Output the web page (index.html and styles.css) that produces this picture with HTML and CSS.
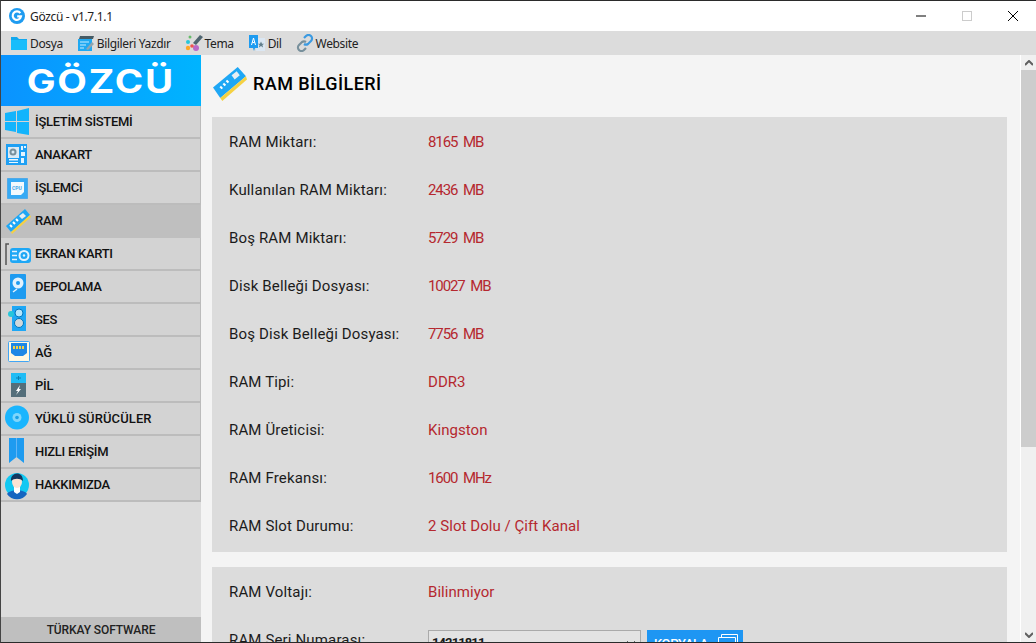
FILE: index.html
```html
<!DOCTYPE html>
<html lang="tr">
<head>
<meta charset="utf-8">
<title>Gözcü</title>
<link rel="stylesheet" href="styles.css">
</head>
<body>
<div class="window">
  <header class="titlebar">
    <svg class="app-icon" viewBox="0 0 16 16"><circle cx="8" cy="8" r="8" fill="#1e9bf0"/><path d="M11.300 5.200A4.200 4.200 0 1 0 12 8.400H8.200" fill="none" stroke="#fff" stroke-width="2.200"/></svg>
    <span class="app-title">Gözcü - v1.7.1.1</span>
    <div class="win-controls">
      <svg class="win-btn" viewBox="0 0 46 30"><path d="M18 15h10" stroke="#000" stroke-width="1"/></svg>
      <svg class="win-btn" viewBox="0 0 46 30"><rect x="18.500" y="10.500" width="9" height="9" fill="none" stroke="#ccc"/></svg>
      <svg class="win-btn" viewBox="0 0 46 30"><path d="M18 10l10 10M28 10L18 20" stroke="#000" stroke-width="1"/></svg>
    </div>
  </header>
  <nav class="menubar">
    <span class="menu-item"><svg class="menu-icon" viewBox="0 0 18 18"><path d="M1 3h6l2 2h8v11H1z" fill="#12a8ee"/><path d="M1 6h16v10H1z" fill="#18bdfb"/></svg>Dosya</span>
    <span class="menu-item"><svg class="menu-icon" viewBox="0 0 18 18"><path d="M1 5h14v12H1z" fill="#1fa9f2"/><path d="M3 2h14l-1 3H2z" fill="#455a64"/><path d="M3 8h9M3 11h6M3 14h4" stroke="#c8ecff" stroke-width="1"/><path d="M9 15l6-7 2 2-6 6z" fill="#90a4ae"/></svg>Bilgileri Yazdır</span>
    <span class="menu-item"><svg class="menu-icon" viewBox="0 0 18 18"><path d="M8 9l7-8 3 2-7 8z" fill="#4f6570"/><circle cx="3" cy="8" r="2" fill="#26c6da"/><circle cx="5" cy="3" r="1.500" fill="#66bb6a"/><circle cx="3" cy="14" r="2.200" fill="#ffa726"/><circle cx="11" cy="14" r="3" fill="#ba68c8"/><circle cx="7" cy="12" r="1.800" fill="#ef5350"/></svg>Tema</span>
    <span class="menu-item"><svg class="menu-icon" viewBox="0 0 18 18"><path d="M8 4h9v13H8z" fill="#dbe7f3"/><path d="M1 1h9v13H7l-1 3-1-3H1z" fill="#1e9bf0"/><path d="M3.500 11L5.500 4l2 7M4.300 8.500h2.400" stroke="#fff" fill="none"/><path d="M13 7.500l1 2.200h2.200l-1.800 1.400.7 2.400-2.100-1.400-2.100 1.400.7-2.400-1.800-1.400H12z" fill="#607d8b"/></svg>Dil</span>
    <span class="menu-item"><svg class="menu-icon" viewBox="0 0 18 18"><path d="M8 4l2-2a3.500 3.500 0 0 1 5 5l-3 3a3.500 3.500 0 0 1-4 0" fill="none" stroke="#3b9ae1" stroke-width="2.200"/><path d="M10 14l-2 2a3.500 3.500 0 0 1-5-5l3-3a3.500 3.500 0 0 1 4 0" fill="none" stroke="#78909c" stroke-width="2.200"/></svg>Website</span>
  </nav>
  <div class="body">
    <aside class="sidebar">
      <div class="logo"><span class="logo-text">GÖZCÜ</span></div>
      <ul class="nav">
        <li class="nav-item"><svg class="nav-icon" viewBox="0 0 30 30"><path d="M4 6l11-2v10H4zM16 4l12-3v13H16zM4 15h11v10L4 23zM16 15h12v13l-12-2z" fill="#12b4fc"/></svg>İŞLETİM SİSTEMİ</li>
        <li class="nav-item"><svg class="nav-icon" viewBox="0 0 30 30"><rect x="5" y="4" width="21" height="21" fill="#1ea0f4"/><rect x="7" y="7" width="11" height="11" fill="#dcebf5"/><circle cx="12" cy="12" r="3.500" fill="#78909c"/><circle cx="12" cy="12" r="1.500" fill="#dcebf5"/><path d="M8 19h9v1.500H8zM8 22h9v1H8z" fill="#eaf6fd"/><path d="M20 6h2v4h-2zM23 6h2v2h-2zM20 12h4v4h-4zM20 18h3v5h-3z" fill="#e3f4ff"/></svg>ANAKART</li>
        <li class="nav-item"><svg class="nav-icon" viewBox="0 0 30 30"><rect x="6.500" y="5.500" width="20" height="20" fill="#35aaf5" stroke="#1e96ea" stroke-dasharray="1 1"/><path d="M10 9h13v10l-3 3H10z" fill="#f2f9fd"/><text class="cpu-text" x="16" y="17">CPU</text></svg>İŞLEMCİ</li>
        <li class="nav-item active"><svg class="nav-icon" viewBox="0 0 30 30"><path d="M5 20L24 3l5 6L10 26z" fill="#1ea7f5"/><path d="M10 26L29 9l1 2-19 17z" fill="#f5d142"/><path d="M9 19l2 2M12 16l2 2M15 13l2 2" stroke="#fff" stroke-width="2"/><path d="M18 10l4-3 3 3-4 3z" fill="#e6eef3"/></svg>RAM</li>
        <li class="nav-item"><svg class="nav-icon" viewBox="0 0 30 30"><path d="M8 5H5v21" fill="none" stroke="#555" stroke-width="1.500"/><rect x="9" y="9" width="21" height="15" rx="3" fill="#1ea7f5"/><circle cx="23" cy="16.500" r="4.500" fill="none" stroke="#e3f2fd" stroke-width="2"/><circle cx="23" cy="16.500" r="1.200" fill="#e3f2fd"/><path d="M11 12.500h5M11 16.500h5M11 20.500h5" stroke="#e3f2fd" stroke-width="1.500"/></svg>EKRAN KARTI</li>
        <li class="nav-item"><svg class="nav-icon" viewBox="0 0 30 30"><rect x="9" y="2" width="16" height="25" rx="1" fill="#1e9bf0"/><circle cx="17" cy="11" r="5.500" fill="#e3f2fd"/><circle cx="17" cy="11" r="2" fill="#1e9bf0"/><path d="M12 20l4-3" stroke="#e3f2fd" stroke-width="1.500"/></svg>DEPOLAMA</li>
        <li class="nav-item"><svg class="nav-icon" viewBox="0 0 30 30"><rect x="11" y="1" width="14" height="25" fill="#1ea7f5"/><circle cx="18" cy="8" r="4" fill="#b3e5fc" stroke="#0277bd"/><circle cx="18" cy="18" r="4.500" fill="#cfd8dc" stroke="#0277bd"/><circle cx="10" cy="9" r="3" fill="#26c6da"/></svg>SES</li>
        <li class="nav-item"><svg class="nav-icon" viewBox="0 0 30 30"><rect x="7.500" y="3.500" width="21" height="20" rx="1" fill="#fff8e1" stroke="#42a5f5"/><path d="M10 5h16v10l-4 3h-8l-4-3z" fill="#1e88e5"/><path d="M12 8h2v3h-2zM15 8h2v3h-2zM18 8h2v3h-2zM21 8h2v3h-2z" fill="#f5d142"/></svg>AĞ</li>
        <li class="nav-item"><svg class="nav-icon" viewBox="0 0 30 30"><rect x="10" y="2" width="15" height="10" fill="#1fbcf5"/><rect x="10" y="12" width="15" height="14" fill="#546e7a"/><path d="M19 14l-4 6h2l-2 4 5-6h-2z" fill="#fff"/><path d="M15 7h5M17.500 5v4" stroke="#0b7db0"/></svg>PİL</li>
        <li class="nav-item wide"><svg class="nav-icon" viewBox="0 0 30 30"><circle cx="16" cy="13.500" r="12" fill="#19b5fe"/><circle cx="16" cy="13.500" r="4.500" fill="#7fd6fb"/><circle cx="16" cy="13.500" r="1.800" fill="#19a0e6"/></svg>YÜKLÜ SÜRÜCÜLER</li>
        <li class="nav-item"><svg class="nav-icon" viewBox="0 0 30 30"><path d="M8 1h15v25l-7.500-6L8 26z" fill="#1e9bf0"/><path d="M15 1h1v19h-1z" fill="#64b5f6"/></svg>HIZLI ERİŞİM</li>
        <li class="nav-item"><svg class="nav-icon" viewBox="0 0 30 30"><circle cx="16" cy="15" r="12" fill="#12c8f2"/><path d="M6 24c3-5 17-5 20 0a12 12 0 0 1-20 0z" fill="#1565c0"/><path d="M13 17h6v5l-3 2-3-2z" fill="#fff"/><ellipse cx="16" cy="12" rx="5" ry="6" fill="#fde3d3"/><path d="M10 11c-1-9 12-11 12 0-3-3-9-3-12 0z" fill="#14385f"/></svg>HAKKIMIZDA</li>
      </ul>
      <div class="sidebar-footer">TÜRKAY SOFTWARE</div>
    </aside>
    <main class="content">
      <h1 class="page-title"><svg class="page-icon" viewBox="0 0 34 34"><path d="M1 21L25 1l8 9L8 31z" fill="#1ea7f5"/><path d="M8 31L33 10l1 3L10 34z" fill="#f5d142"/><path d="M8 20l2 2M11 17l2 2M14 14l2 2" stroke="#fff" stroke-width="2"/><path d="M19 9l5-4 3 4-5 4z" fill="#e6eef3"/></svg>RAM BİLGİLERİ</h1>
      <section class="card">
        <div class="row"><span class="label">RAM Miktarı:</span><span class="value num">8165 MB</span></div>
        <div class="row"><span class="label">Kullanılan RAM Miktarı:</span><span class="value num">2436 MB</span></div>
        <div class="row"><span class="label">Boş RAM Miktarı:</span><span class="value num">5729 MB</span></div>
        <div class="row"><span class="label">Disk Belleği Dosyası:</span><span class="value num">10027 MB</span></div>
        <div class="row"><span class="label">Boş Disk Belleği Dosyası:</span><span class="value num">7756 MB</span></div>
        <div class="row"><span class="label">RAM Tipi:</span><span class="value">DDR3</span></div>
        <div class="row"><span class="label">RAM Üreticisi:</span><span class="value">Kingston</span></div>
        <div class="row"><span class="label">RAM Frekansı:</span><span class="value num">1600 MHz</span></div>
        <div class="row"><span class="label">RAM Slot Durumu:</span><span class="value">2 Slot Dolu / Çift Kanal</span></div>
      </section>
      <section class="card">
        <div class="row"><span class="label">RAM Voltajı:</span><span class="value">Bilinmiyor</span></div>
        <div class="row serial"><span class="label">RAM Seri Numarası:</span>
          <div class="select">14211811<svg class="chev" viewBox="0 0 10 6"><path d="M1 1l4 4 4-4" fill="none" stroke="#666"/></svg></div>
          <button class="copy">KOPYALA<svg class="copy-icon" viewBox="0 0 20 20"><path d="M.5 3.500h17v16H.5zM3.500 3V.5h16v15H18" fill="none" stroke="#fff"/></svg></button>
        </div>
      </section>
    </main>
    <div class="scrollbar">
      <div class="arrow"><svg viewBox="0 0 8 6"><path d="M0 5l4-4 4 4" fill="none" stroke="#606060" stroke-width="2"/></svg></div>
      <div class="thumb"></div>
      <div class="track"></div>
      <div class="arrow"><svg viewBox="0 0 8 6"><path d="M0 1l4 4 4-4" fill="none" stroke="#606060" stroke-width="2"/></svg></div>
    </div>
  </div>
</div>
</body>
</html>
```
FILE: styles.css
```css
* { box-sizing: border-box; }
html, body { margin: 0; height: 100%; overflow: hidden; background: #fff; }
body { font-family: "Roboto", "Liberation Sans", sans-serif; color: #000; }
.window { width: 1036px; height: 643px; display: flex; flex-direction: column; border-top: 1px solid #2b2b2b; border-bottom: 1px solid #2b2b2b; border-left: 1px solid #444; overflow: hidden; }
.titlebar { height: 30px; flex: none; display: flex; align-items: center; background: #fff; padding-left: 8px; }
.app-icon { width: 16px; height: 16px; margin-right: 5px; }
.app-title { font: 12px "Noto Sans", sans-serif; letter-spacing: -.33px; color: #222; }
.win-controls { margin-left: auto; display: flex; }
.win-btn { width: 46px; height: 30px; display: block; }
.menubar { height: 24px; flex: none; background: #dcdcdc; display: flex; align-items: center; padding-left: 9px; gap: 14px; font: 12px "Noto Sans", sans-serif; letter-spacing: -.36px; color: #222; }
.menu-item { display: flex; align-items: center; gap: 2px; }
.menu-icon { width: 18px; height: 18px; }
.body { flex: 1; min-height: 0; display: flex; }
.sidebar { width: 200px; flex: none; display: flex; flex-direction: column; background: #dcdcdc; }
.logo { height: 51px; flex: none; background: linear-gradient(90deg, #0a93ff, #00b4ff); color: #fff; font: 700 32px/53px "Inter", sans-serif; letter-spacing: 1.5px; text-align: center; }
.logo-text { display: inline-block; transform: scaleX(1.2); }
.nav { list-style: none; margin: 0; padding: 0; }
.nav-item { height: 33px; display: flex; align-items: center; gap: 4px; background: #d3d3d3; border-bottom: 2px solid #bcbcbc; border-right: 1px solid #bcbcbc; font-size: 13px; font-weight: 500; letter-spacing: -.3px; color: #111; }
.nav-item.wide { letter-spacing: .1px; }
.nav-icon { width: 30px; height: 30px; flex: none; }
.cpu-text { font: 700 5px "Roboto", sans-serif; fill: #4aa8e8; text-anchor: middle; letter-spacing: 0; }
.nav-item.active { background: #bfbfbf; border-color: #bfbfbf; }
.sidebar-footer { margin-top: auto; height: 25px; background: #bfbfbf; font-size: 12px; font-weight: 500; line-height: 27px; text-align: center; letter-spacing: -.1px; color: #222; }
.content { flex: 1; min-width: 0; background: #f4f4f4; padding: 0 13px 0 11px; overflow: hidden; }
.page-title { margin: 0; height: 62px; display: flex; align-items: center; gap: 6px; font-size: 18px; font-weight: 500; letter-spacing: .45px; padding-bottom: 5px; }
.page-icon { width: 35px; height: 35px; }
.card { background: #dcdcdc; padding: 1px 17px 2px; margin-bottom: 15px; }
.row { height: 48px; display: flex; align-items: center; font-size: 15px; color: #1b1b1b; letter-spacing: .15px; }
.label { width: 199px; flex: none; }
.value { color: #b5282f; letter-spacing: .05px; }
.num { letter-spacing: -1.1px; word-spacing: 3px; }
.serial { align-items: flex-start; }
.serial .label { margin-top: 15px; }
.select { width: 213px; height: 26px; margin-top: 14px; background: #e3e3e3; border: 1px solid #aaa; font: 700 13px/22px "Roboto", sans-serif; letter-spacing: -.9px; padding: 0 0 0 3px; display: flex; align-items: center; justify-content: space-between; }
.chev { width: 10px; height: 6px; margin-right: 4px; }
.copy { width: 96px; height: 30px; margin: 14px 0 0 6px; background: #1e96f3; border: 0; color: #fff; font: 500 13px "Roboto", sans-serif; letter-spacing: -.4px; display: flex; align-items: flex-start; justify-content: space-between; padding: 6px 5px 0 7px; }
.copy-icon { width: 20px; height: 20px; margin-top: -2px; }
.scrollbar { width: 16px; flex: none; background: #f0f0f0; display: flex; flex-direction: column; border-left: 1px solid #fff; }
.arrow { height: 15px; display: flex; align-items: center; justify-content: center; }
.arrow svg { width: 8px; height: 6px; }
.thumb { height: 377px; background: #cdcdcd; flex: none; }
.track { flex: 1; }
```
